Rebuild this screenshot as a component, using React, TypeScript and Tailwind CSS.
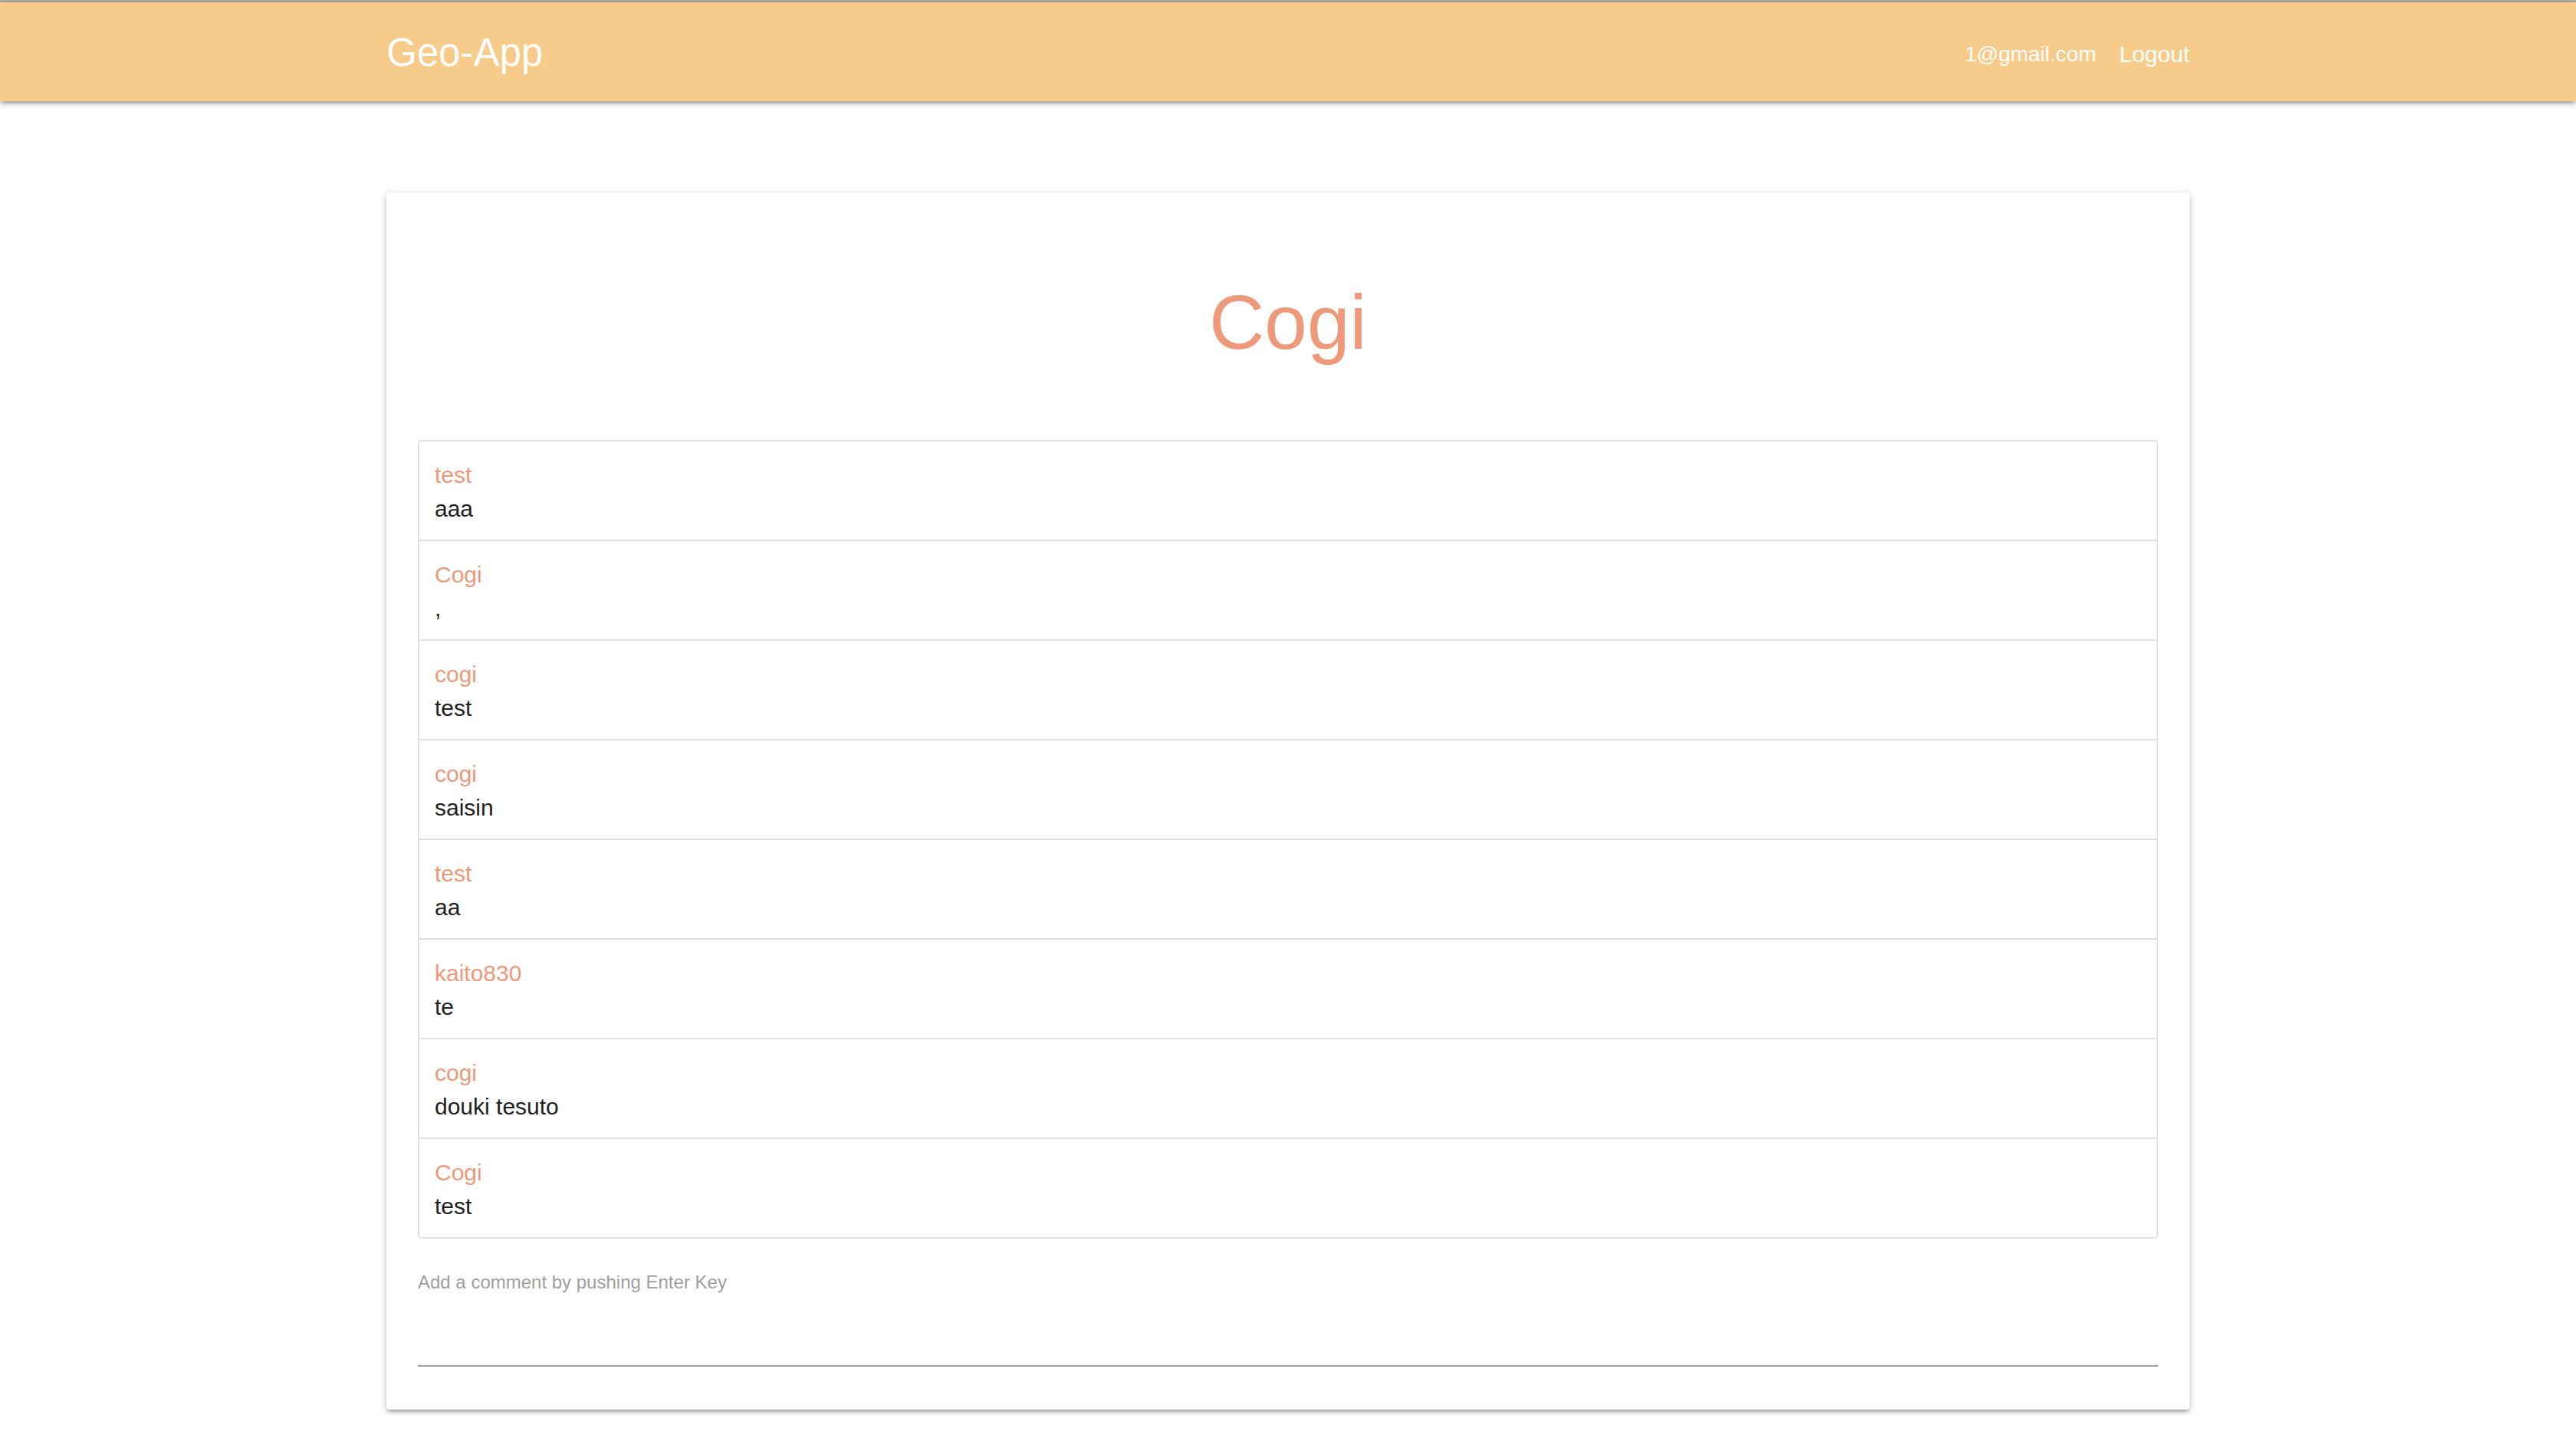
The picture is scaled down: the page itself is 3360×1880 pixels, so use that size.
import React from 'react';

type Comment = { author: string; text: string };

const comments: Comment[] = [
  { author: 'test', text: 'aaa' },
  { author: 'Cogi', text: ',' },
  { author: 'cogi', text: 'test' },
  { author: 'cogi', text: 'saisin' },
  { author: 'test', text: 'aa' },
  { author: 'kaito830', text: 'te' },
  { author: 'cogi', text: 'douki tesuto' },
  { author: 'Cogi', text: 'test' },
];

const App: React.FC = () => {
  return (
    <div className="min-h-screen bg-white [font-family:'Liberation_Sans',Arial,sans-serif]">
      <div className="h-[3px] bg-[#a9a9a9]" />
      {/* Navbar */}
      <nav className="relative z-10 h-[129px] bg-[#f7cc8b] shadow-[0_4px_4px_0_rgba(0,0,0,0.14),0_6px_2px_-4px_rgba(0,0,0,0.12),0_2px_10px_0_rgba(0,0,0,0.2)]">
        <div className="mx-auto flex h-full w-[70%] items-center justify-between">
          <a className="pt-[3px] text-[51px] leading-[126px] text-white">Geo-App</a>
          <div className="flex items-center gap-[30px] pt-[6px] text-white">
            <a className="text-[28px]">1@gmail.com</a>
            <a className="text-[30px]">Logout</a>
          </div>
        </div>
      </nav>

      <main className="mx-auto w-[70%] pt-[119px] pb-[40px]">
        <div className="rounded-[4px] bg-white px-[41px] pt-[114px] pb-[56px] shadow-[0_4px_4px_0_rgba(0,0,0,0.14),0_6px_2px_-4px_rgba(0,0,0,0.12),0_2px_10px_0_rgba(0,0,0,0.2)]">
          <h1 className="text-center text-[100px] leading-[110px] text-[#ee997a]">Cogi</h1>

          <ul className="mt-[99px] rounded-[4px] border-2 border-[#e0e0e0]">
            {comments.map((c, i) => (
              <li
                key={i}
                className={`px-[20px] pt-[22px] pb-[18px] text-[30px] leading-[44px] ${i < comments.length - 1 ? 'border-b-2 border-[#e0e0e0]' : ''}`}
              >
                <div className="text-[#ee997a]">{c.author}</div>
                <div className="text-[#212121]">{c.text}</div>
              </li>
            ))}
          </ul>

          <div className="mt-[42px]">
            <label className="block text-[24px] leading-[30px] text-[#9e9e9e]">Add a comment by pushing Enter Key</label>
            <input
              type="text"
              className="block h-[95px] w-full border-b-2 border-[#9e9e9e] bg-transparent text-[30px] outline-none"
            />
          </div>
        </div>
      </main>
    </div>
  );
};

export default App;
